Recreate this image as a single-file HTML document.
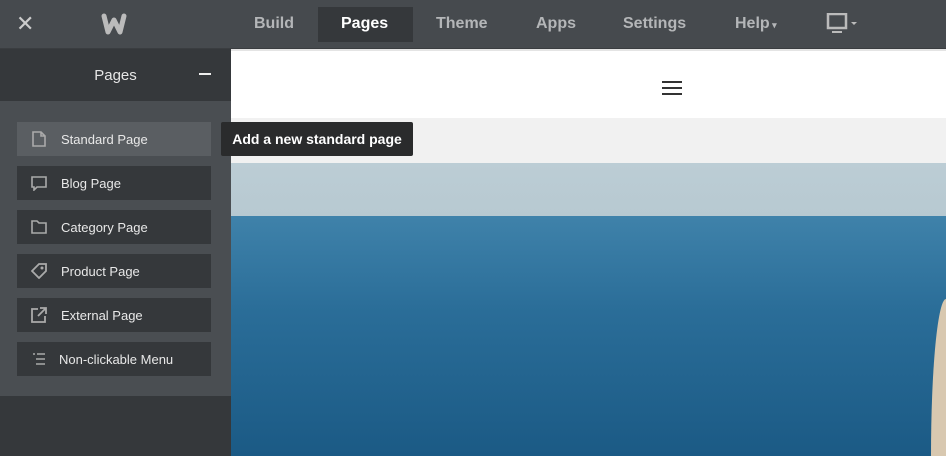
<!DOCTYPE html><html style="overflow:hidden;height:456px"><head><style>
html,body{margin:0;width:946px;height:456px;overflow:hidden}
body{position:relative;font-family:"Liberation Sans",sans-serif;background:#35383b}
.top{position:absolute;left:0;top:0;width:946px;height:48px;background:#464a4e;border-bottom:1px solid #3a3d40}
.nav{position:absolute;top:0;height:48px;line-height:48px;color:#b4b6b8;font-weight:bold;font-size:16px}
.side{position:absolute;left:0;top:49px;width:231px;height:407px;background:#35383b}
.sh{height:52px;line-height:54px;text-align:center;color:#e6e6e6;font-size:15px;position:relative}
.sb{position:absolute;top:52px;left:0;width:231px;height:295px;background:#4a4e52}
.it{position:absolute;left:17px;width:194px;height:34px;background:#35383b;color:#e8e8e8;font-size:13px;line-height:36px}
.it span{position:absolute;left:44px}
.it svg{position:absolute;left:14px;top:9px}
.main{position:absolute;left:231px;top:49px;width:715px;height:407px;overflow:hidden}
</style></head><body>
<div class="top">
<div style="position:absolute;left:16px;top:14px;color:#ccc;font-size:22px;line-height:20px">✕</div>
<svg style="position:absolute;left:100px;top:12px" width="28" height="24" viewBox="0 0 28 24"><path d="M4 4 L8 20 L14 8 L20 20 L24 4" fill="none" stroke="#bbb" stroke-width="5" stroke-linejoin="round" stroke-linecap="round"/></svg>
<div class="nav" style="left:254px">Build</div>
<div style="position:absolute;left:318px;top:7px;width:95px;height:35px;background:#35383b"></div>
<div class="nav" style="left:341px;color:#fff">Pages</div>
<div class="nav" style="left:436px">Theme</div>
<div class="nav" style="left:536px">Apps</div>
<div class="nav" style="left:623px">Settings</div>
<div class="nav" style="left:735px">Help<span style="font-size:9px"> ▾</span></div>
<svg style="position:absolute;left:826px;top:13px" width="34" height="22"><rect x="2" y="1" width="18" height="14" fill="none" stroke="#bbb" stroke-width="2.5"/><rect x="6" y="18" width="10" height="2" fill="#bbb"/><path d="M25 9h6l-3 3z" fill="#bbb"/></svg>
</div>
<div class="side">
<div class="sh">Pages<div style="position:absolute;left:199px;top:24px;width:12px;height:2px;background:#eee"></div></div>
<div class="sb">
<div class="it" style="top:21px;background:#5a5e62"><svg width="16" height="16"><path d="M2 1h8l4 4v10H2z M10 1v4h4" fill="none" stroke="#aaa" stroke-width="1.6"/></svg><span>Standard Page</span></div>
<div class="it" style="top:65px"><svg width="16" height="16"><path d="M1 2h14v10H6l-3 3v-3H1z" fill="none" stroke="#aaa" stroke-width="1.6"/></svg><span>Blog Page</span></div>
<div class="it" style="top:109px"><svg width="16" height="16"><path d="M1 2h5l2 2h7v10H1z" fill="none" stroke="#aaa" stroke-width="1.6"/></svg><span>Category Page</span></div>
<div class="it" style="top:153px"><svg width="16" height="16"><path d="M8 1h7v7l-7 7-7-7z" fill="none" stroke="#aaa" stroke-width="1.8"/><circle cx="11" cy="5" r="1.5" fill="#aaa"/></svg><span>Product Page</span></div>
<div class="it" style="top:197px"><svg width="16" height="16"><path d="M7 2H1v13h13V9 M9 1h6v6 M15 1L7 9" fill="none" stroke="#aaa" stroke-width="1.8"/></svg><span>External Page</span></div>
<div class="it" style="top:241px"><svg width="16" height="16"><path d="M2 3h2M6 3h8M5 8h9M5 13h9" stroke="#aaa" stroke-width="1.6"/></svg><span style="left:42px">Non-clickable Menu</span></div>
</div></div>
<div class="main">
<div style="height:69px;background:#fff;border-top:2px solid #e4e4e4;box-sizing:border-box;position:relative"><div style="position:absolute;left:431px;top:30px;width:20px;height:14px;border-top:2px solid #333;border-bottom:2px solid #333;box-sizing:border-box"></div><div style="position:absolute;left:431px;top:36px;width:20px;height:2px;background:#333"></div></div>
<div style="height:45px;background:#f1f1f1"></div>
<div style="height:53px;background:linear-gradient(#bccdd5,#b7c9d1)"></div>
<div style="height:240px;background:linear-gradient(#3f82aa,#2a6d98 40%,#1b5a85)"></div>
<div style="position:absolute;left:700px;top:250px;width:15px;height:157px;background:#d8c8b0;border-radius:100% 0 0 0"></div>
</div>
<div style="position:absolute;left:221px;top:122px;width:192px;height:34px;background:#2a2b2c;color:#fff;font-weight:bold;font-size:14px;line-height:34px;text-align:center;border-radius:2px">Add a new standard page</div>
</body></html>
